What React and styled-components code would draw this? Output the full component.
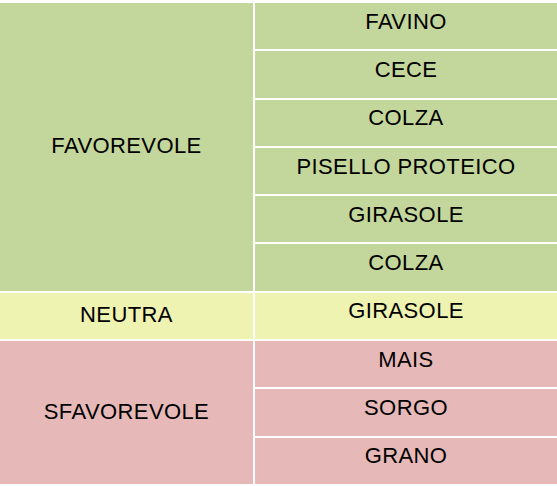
import React from "react";
import styled, { createGlobalStyle } from "styled-components";

const Global = createGlobalStyle`
  html, body { margin: 0; padding: 0; background: #ffffff; }
  body { font-family: "Liberation Sans", Arial, sans-serif; }
`;

const COLORS = {
  green: "#c3d69b",
  yellow: "#eef3b1",
  red: "#e6b9b8",
};

const Grid = styled.div`
  margin-top: 3px;
  display: grid;
  grid-template-columns: 253px 302px;
  grid-template-rows: repeat(10, 1fr);
  column-gap: 2px;
  row-gap: 2px;
  height: 481px;
  width: 557px;
`;

const Cell = styled.div`
  background: ${(p) => COLORS[p.$tone]};
  display: flex;
  align-items: center;
  justify-content: center;
  font-size: 22px;
  color: #000;
  letter-spacing: 0.4px;
`;

const GroupCell = styled(Cell)`
  grid-column: 1;
  grid-row: ${(p) => p.$start} / span ${(p) => p.$span};
  padding-bottom: 2px;
`;

const ItemCell = styled(Cell)`
  grid-column: 2;
  padding-bottom: 9px;
`;

const groups = [
  { label: "FAVOREVOLE", tone: "green", items: ["FAVINO", "CECE", "COLZA", "PISELLO PROTEICO", "GIRASOLE", "COLZA"] },
  { label: "NEUTRA", tone: "yellow", items: ["GIRASOLE"] },
  { label: "SFAVOREVOLE", tone: "red", items: ["MAIS", "SORGO", "GRANO"] },
];

export default function App() {
  let row = 1;
  const cells = [];
  groups.forEach((g, gi) => {
    cells.push(
      <GroupCell key={`g${gi}`} $tone={g.tone} $start={row} $span={g.items.length}>
        {g.label}
      </GroupCell>
    );
    g.items.forEach((it, ii) => {
      cells.push(
        <ItemCell key={`i${gi}-${ii}`} $tone={g.tone} style={{ gridRow: row + ii }}>
          {it}
        </ItemCell>
      );
    });
    row += g.items.length;
  });
  return (
    <>
      <Global />
      <Grid>{cells}</Grid>
    </>
  );
}
